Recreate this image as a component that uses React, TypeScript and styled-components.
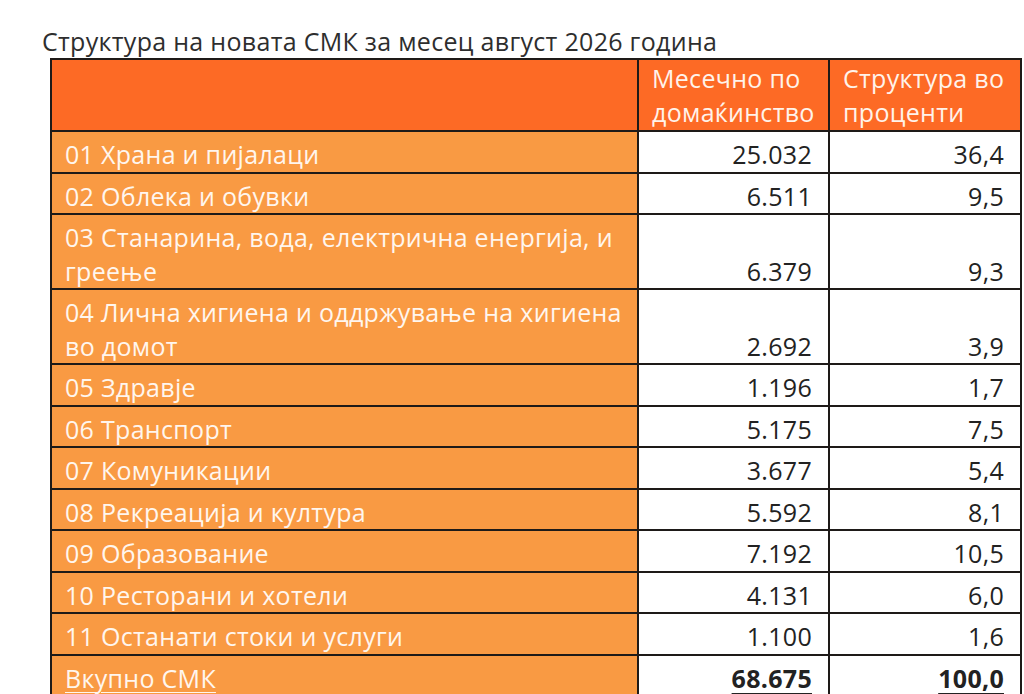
import styled, { createGlobalStyle } from "styled-components";

interface Row {
  label: string;
  monthly: string;
  percent: string;
}

const rows: Row[] = [
  { label: "01 Храна и пијалаци", monthly: "25.032", percent: "36,4" },
  { label: "02 Облека и обувки", monthly: "6.511", percent: "9,5" },
  {
    label: "03 Станарина, вода, електрична енергија, и\nгреење",
    monthly: "6.379",
    percent: "9,3",
  },
  {
    label: "04 Лична хигиена и оддржување на хигиена\nво домот",
    monthly: "2.692",
    percent: "3,9",
  },
  { label: "05 Здравје", monthly: "1.196", percent: "1,7" },
  { label: "06 Транспорт", monthly: "5.175", percent: "7,5" },
  { label: "07 Комуникации", monthly: "3.677", percent: "5,4" },
  { label: "08 Рекреација и култура", monthly: "5.592", percent: "8,1" },
  { label: "09 Образование", monthly: "7.192", percent: "10,5" },
  { label: "10 Ресторани и хотели", monthly: "4.131", percent: "6,0" },
  { label: "11 Останати стоки и услуги", monthly: "1.100", percent: "1,6" },
];

const App = () => {
  return (
    <>
      <GlobalStyle />
      <Page>
        <Title>Структура на новата СМК за месец август 2026 година</Title>
        <Table>
          <colgroup>
            <col style={{ width: 587 }} />
            <col style={{ width: 191 }} />
            <col style={{ width: 192 }} />
          </colgroup>
          <thead>
            <tr>
              <HeadCell />
              <HeadCell>
                Месечно по
                <br />
                домаќинство
              </HeadCell>
              <HeadCell>
                Структура во
                <br />
                проценти
              </HeadCell>
            </tr>
          </thead>
          <tbody>
            {rows.map((row) => (
              <tr key={row.label}>
                <LabelCell>{row.label}</LabelCell>
                <NumberCell>{row.monthly}</NumberCell>
                <NumberCell>{row.percent}</NumberCell>
              </tr>
            ))}
            <tr>
              <LabelCell $total>Вкупно СМК</LabelCell>
              <NumberCell $total>68.675</NumberCell>
              <NumberCell $total>100,0</NumberCell>
            </tr>
          </tbody>
        </Table>
      </Page>
    </>
  );
};

export default App;

const GlobalStyle = createGlobalStyle`
  html, body {
    margin: 0;
    padding: 0;
    background: #ffffff;
    font-family: "Open Sans", "Noto Sans", sans-serif;
  }
`;

const Page = styled.div`
  display: flex;
  flex-direction: column;
  align-items: flex-start;
  padding: 24px 0 0 42px;
  height: 694px;
  box-sizing: border-box;
  overflow: hidden;
`;

const Title = styled.div`
  font-size: 25px;
  letter-spacing: 0.3px;
  line-height: 34px;
  color: #2e2e2e;
  white-space: nowrap;
`;

const Table = styled.table`
  margin-left: 8px;
  width: 970px;
  table-layout: fixed;
  border-collapse: collapse;
  font-size: 25px;
  letter-spacing: 0.3px;
`;

const HeadCell = styled.th`
  height: 69px;
  padding: 1px 8px 0 13px;
  background: #fd6a25;
  color: #fff3ea;
  border: 2px solid #1e1a18;
  font-weight: 400;
  line-height: 34px;
  text-align: left;
  vertical-align: top;
  white-space: nowrap;
`;

const LabelCell = styled.td<{ $total?: boolean }>`
  padding: 6px 8px 0 13px;
  background: #f99a43;
  color: #fff6ee;
  border: 2px solid #1e1a18;
  line-height: 33.5px;
  white-space: pre-line;
  vertical-align: top;
  text-decoration: ${({ $total }) => ($total ? "underline" : "none")};
  text-decoration-thickness: 1px;
  text-underline-offset: 4px;
`;

const NumberCell = styled.td<{ $total?: boolean }>`
  padding: 6px 16px 0 8px;
  background: #ffffff;
  color: #222222;
  border: 2px solid #1e1a18;
  line-height: 33.5px;
  text-align: right;
  vertical-align: bottom;
  font-weight: ${({ $total }) => ($total ? 700 : 400)};
  text-decoration: ${({ $total }) => ($total ? "underline" : "none")};
  text-decoration-thickness: 2px;
  text-underline-offset: 5px;
`;
